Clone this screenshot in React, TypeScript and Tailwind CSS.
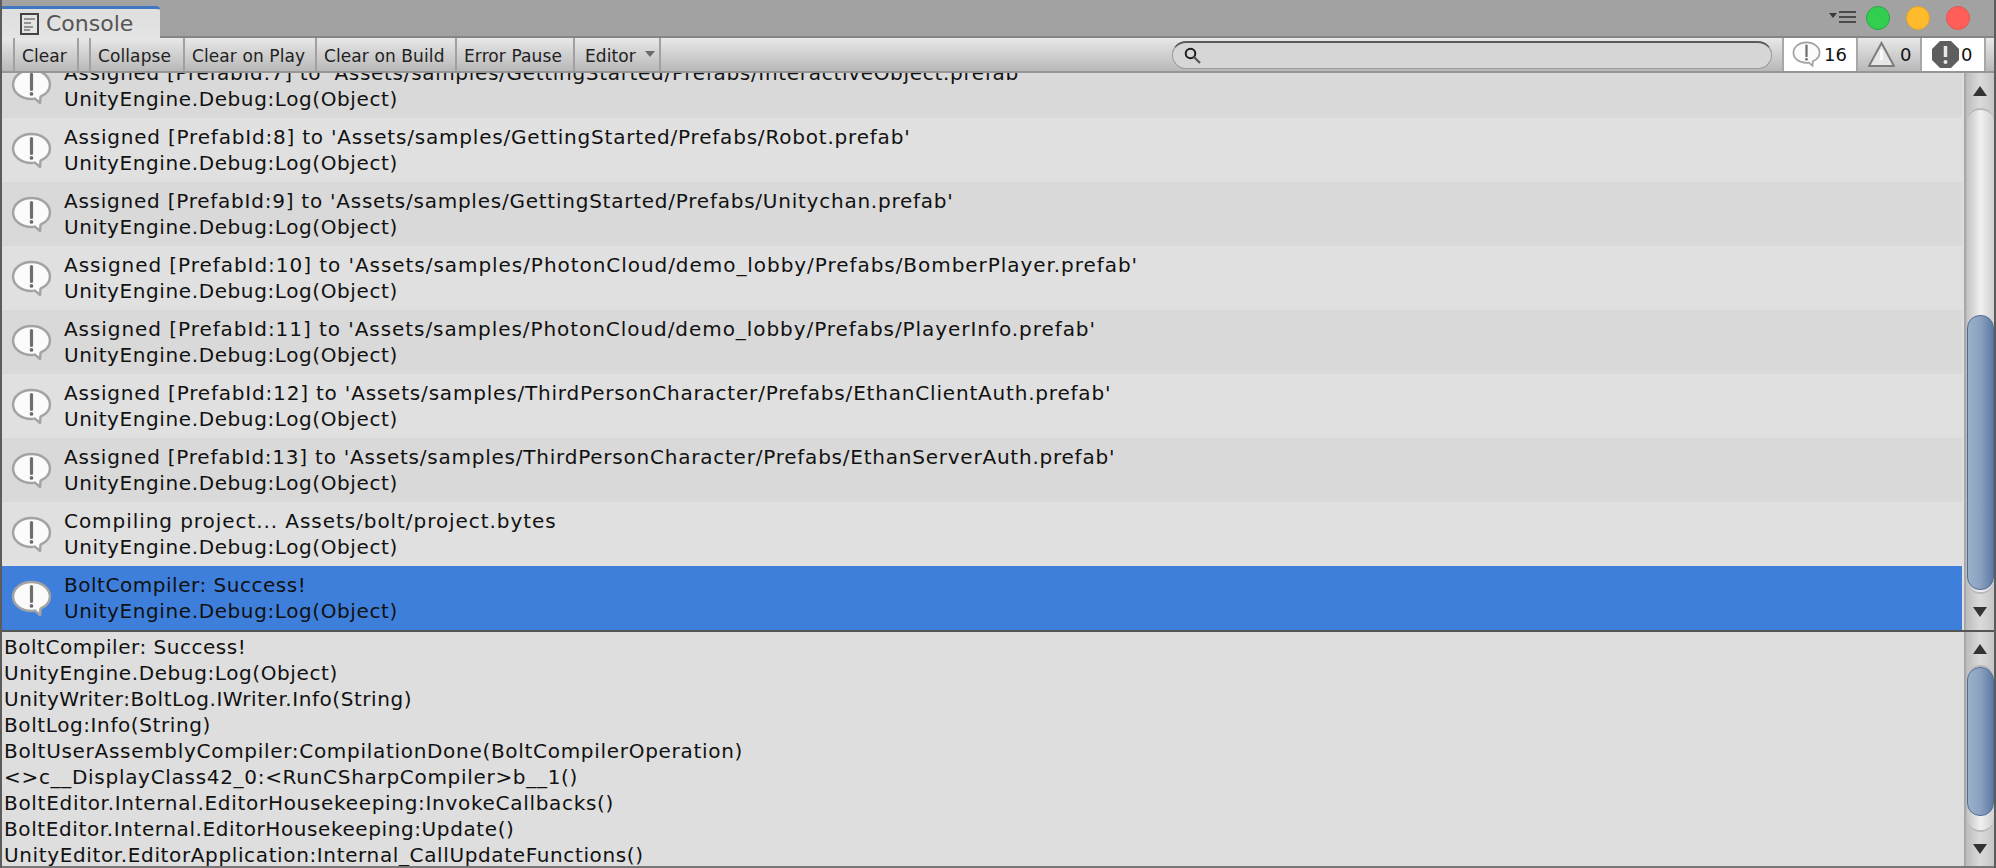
// tracking differs per line because the picture's font has other glyph widths than DejaVu
const rows = [
  { text: "Assigned [PrefabId:7] to 'Assets/samples/GettingStarted/Prefabs/InteractiveObject.prefab'", track: 'tracking-[0.69px]' },
  { text: "Assigned [PrefabId:8] to 'Assets/samples/GettingStarted/Prefabs/Robot.prefab'", track: 'tracking-[0.8px]' },
  { text: "Assigned [PrefabId:9] to 'Assets/samples/GettingStarted/Prefabs/Unitychan.prefab'", track: 'tracking-[0.76px]' },
  { text: "Assigned [PrefabId:10] to 'Assets/samples/PhotonCloud/demo_lobby/Prefabs/BomberPlayer.prefab'", track: 'tracking-[0.95px]' },
  { text: "Assigned [PrefabId:11] to 'Assets/samples/PhotonCloud/demo_lobby/Prefabs/PlayerInfo.prefab'", track: 'tracking-[0.94px]' },
  { text: "Assigned [PrefabId:12] to 'Assets/samples/ThirdPersonCharacter/Prefabs/EthanClientAuth.prefab'", track: 'tracking-[0.81px]' },
  { text: "Assigned [PrefabId:13] to 'Assets/samples/ThirdPersonCharacter/Prefabs/EthanServerAuth.prefab'", track: 'tracking-[0.77px]' },
  { text: 'Compiling project... Assets/bolt/project.bytes', track: 'tracking-[0.94px]' },
  { text: 'BoltCompiler: Success!', track: 'tracking-[0.53px]' },
]

const stack = [
  { text: 'BoltCompiler: Success!', track: 'tracking-[0.53px]' },
  { text: 'UnityEngine.Debug:Log(Object)', track: 'tracking-[0.6px]' },
  { text: 'UnityWriter:BoltLog.IWriter.Info(String)', track: 'tracking-[0.55px]' },
  { text: 'BoltLog:Info(String)', track: 'tracking-[0.6px]' },
  { text: 'BoltUserAssemblyCompiler:CompilationDone(BoltCompilerOperation)', track: 'tracking-[0.7px]' },
  { text: '<>c__DisplayClass42_0:<RunCSharpCompiler>b__1()', track: 'tracking-[0.7px]' },
  { text: 'BoltEditor.Internal.EditorHousekeeping:InvokeCallbacks()', track: 'tracking-[0.7px]' },
  { text: 'BoltEditor.Internal.EditorHousekeeping:Update()', track: 'tracking-[0.6px]' },
  { text: 'UnityEditor.EditorApplication:Internal_CallUpdateFunctions()', track: 'tracking-[0.63px]' },
]

const buttons = [
  { label: 'Clear', w: 'w-[64px]' },
  { label: 'Collapse', w: 'w-[94px]' },
  { label: 'Clear on Play', w: 'w-[132px]' },
  { label: 'Clear on Build', w: 'w-[140px]' },
  { label: 'Error Pause', w: 'w-[118px]' },
]

function InfoIcon({ size = 41 }: { size?: number }) {
  return (
    <svg width={size} height={size * 0.9} viewBox="0 0 41 37" className="shrink-0">
      <path
        d="M20.5 2C10 2 2 8.4 2 16.5S10 31 20.5 31c1.2 0 2.3-.1 3.4-.3L29 35l.6-6.2C35.300 26.200 39 21.800 39 16.500 39 8.400 31 2 20.500 2Z"
        fill="#fbfbfb"
        stroke="#a3a3a3"
        strokeWidth="2.5"
      />
      <path d="M20.500 6.500v15" stroke="#6e6e6e" strokeWidth="3.200" strokeLinecap="round" />
      <circle cx="20.500" cy="26" r="1.900" fill="#6e6e6e" />
    </svg>
  )
}

function Arrow({ down = false }: { down?: boolean }) {
  return (
    <svg width="14" height="10" viewBox="0 0 14 10" className="block">
      <path d={down ? 'M0 0h14L7 10Z' : 'M7 0l7 10H0Z'} fill="#333333" />
    </svg>
  )
}

function Scrollbar({ children, start, end }: { children: React.ReactNode; start: string; end: string }) {
  return (
    <div className="w-[30px] shrink-0 flex flex-col items-center bg-gradient-to-r from-[#bcbcbc] via-[#dadada] to-[#c6c6c6] border-l-2 border-[#a8a8a8]">
      <div className={`shrink-0 flex items-center justify-center ${start}`}>
        <Arrow />
      </div>
      <div className="flex-1 w-[27px] min-h-0 flex flex-col">{children}</div>
      <div className={`shrink-0 flex items-center justify-center ${end}`}>
        <Arrow down />
      </div>
    </div>
  )
}

// white rounded capsule with the blue position bar sitting inside it
function Thumb({ top, bottom }: { top: string; bottom: string }) {
  return (
    <div className="flex-1 rounded-[14px] bg-gradient-to-r from-[#c4c4c4] via-[#f0f0f0] to-[#d0d0d0] border-y-2 border-[#b8b8b8] flex flex-col">
      <div className={`${top} shrink-0`} />
      <div className="flex-1 rounded-[13px] bg-gradient-to-r from-[#9cb0cb] via-[#8ba1c0] to-[#5f7ba3] border border-[#4d6a98]" />
      <div className={`${bottom} shrink-0`} />
    </div>
  )
}

export default function App() {
  return (
    <div className="w-[1996px] h-[868px] overflow-hidden flex flex-col bg-[#dedede] font-['DejaVu_Sans',sans-serif] text-[#111111] border-x-2 border-x-[#5c5c5c]">
      {/* tab strip */}
      <div className="h-[36px] shrink-0 bg-[#a2a2a2] flex items-start justify-between">
        <div className="relative z-10 mt-[6px] w-[158px] h-[32px] border-t-[3px] border-[#3f77c0] rounded-tr-[4px] bg-gradient-to-b from-[#dedede] to-[#e4e4e4] flex items-center pl-[18px] gap-[7px] text-[22px] text-[#555555]">
          <svg width="19" height="22" viewBox="0 0 19 22">
            <rect x="1" y="1" width="17" height="20" fill="#e4e4e4" stroke="#444444" strokeWidth="2" />
            <path d="M4 6h11M4 10h7M4 14h9M4 17h6" stroke="#777777" strokeWidth="1.500" />
          </svg>
          <span>Console</span>
        </div>
        <div className="flex items-center gap-[16px] h-full pr-[24px]">
          <svg width="28" height="12" viewBox="0 0 28 12" className="-mr-[7px] -mt-[3px]">
            <path d="M0 2h8L4 7Z" fill="#3a3a3a" />
            <path d="M10 1h17M10 6h17M10 11h17" stroke="#4a4a4a" strokeWidth="2" />
          </svg>
          <div className="w-[24px] h-[24px] rounded-full bg-[#31ce4f] border border-[#2aa842]" />
          <div className="w-[24px] h-[24px] rounded-full bg-[#ffbb2c] border border-[#e0a52f]" />
          <div className="w-[24px] h-[24px] rounded-full bg-[#ff5f58] border border-[#e6544f]" />
        </div>
      </div>

      {/* toolbar */}
      <div className="h-[37px] shrink-0 flex items-stretch border-t-2 border-t-[#858585] border-b-2 border-b-[#969696] bg-gradient-to-b from-[#e8e8e8] to-[#b8b8b8] text-[17px] tracking-[0.1px] text-[#222222]">
        <div className="w-[11px] shrink-0" />
        {buttons.map((b, i) => (
          <div key={b.label} className="flex shrink-0">
            <div className={`${b.w} flex items-center pl-[7px] pt-[4px] border-l-2 border-[#a0a0a0]`}>
              {b.label}
            </div>
            {i === 0 && <div className="w-[12px] border-l-2 border-[#a0a0a0]" />}
          </div>
        ))}
        <div className="w-[88px] shrink-0 flex items-center pl-[10px] pt-[4px] gap-[9px] border-x-2 border-[#a0a0a0]">
          Editor
          <svg width="10" height="6" viewBox="0 0 10 6" className="-mt-[6px]">
            <path d="M0 0h10L5 6Z" fill="#6a6a6a" />
          </svg>
        </div>
        <div className="flex-1" />
        <div className="w-[600px] h-[28px] self-center shrink-0 rounded-[14px] bg-[#d6d6d6] border border-[#9a9a9a] border-t-2 border-t-[#5a5a5a] flex items-center pl-[11px]">
          <svg width="17" height="17" viewBox="0 0 17 17">
            <circle cx="6.500" cy="6.500" r="4.800" fill="none" stroke="#1c1c1c" strokeWidth="2" />
            <path d="M10 10l6 6" stroke="#555555" strokeWidth="2.200" />
          </svg>
        </div>
        <div className="w-[10px] shrink-0" />
        <div className="w-[74px] shrink-0 flex items-center pl-[8px] gap-[3px] bg-white border-l-2 border-[#a8a8a8] text-[#111111] text-[18px]">
          <InfoIcon size={29} />
          16
        </div>
        <div className="w-[64px] shrink-0 flex items-center pl-[10px] gap-[5px] border-l-2 border-[#a8a8a8] text-[#111111] text-[18px]">
          <svg width="27" height="27" viewBox="0 0 27 27" className="shrink-0">
            <path d="M13.500 2 26 25H1Z" fill="#e6e6e6" stroke="#7c7c7c" strokeWidth="2" />
            <path d="M13.500 9v10" stroke="#fafafa" strokeWidth="3" />
          </svg>
          0
        </div>
        <div className="w-[64px] shrink-0 flex items-center pl-[9px] gap-[1px] bg-white border-l-2 border-[#a8a8a8] text-[#111111] text-[18px]">
          <svg width="29" height="29" viewBox="0 0 29 29" className="shrink-0">
            <path d="M9 1h11l8 8v11l-8 8H9l-8-8V9Z" fill="#5e5e5e" />
            <path d="M14.500 6v11" stroke="#e8e8e8" strokeWidth="3.500" />
            <circle cx="14.500" cy="22" r="2" fill="#e8e8e8" />
          </svg>
          0
        </div>
        <div className="w-[10px] shrink-0 border-l-2 border-[#a8a8a8]" />
      </div>

      {/* log rows */}
      <div className="h-[559px] shrink-0 flex min-h-0 border-b-2 border-b-[#555555]">
        <div className="flex-1 min-w-0 overflow-hidden pr-[2px] bg-[#dfdfdf]">
          <div className="-mt-[19px]">
            {rows.map((row, i) => {
              const selected = i === rows.length - 1
              return (
                <div
                  key={row.text}
                  className={`h-[64px] flex items-center pl-[9px] gap-[12px] text-[20px] leading-[26px] ${
                    selected ? 'bg-[#3f7fdc]' : i % 2 === 0 ? 'bg-[#d9d9d9]' : 'bg-[#e0e0e0]'
                  }`}
                >
                  <InfoIcon />
                  <div className="whitespace-nowrap">
                    <div className={row.track}>{row.text}</div>
                    <div className="tracking-[0.6px]">UnityEngine.Debug:Log(Object)</div>
                  </div>
                </div>
              )
            })}
          </div>
        </div>
        <Scrollbar start="h-[35px]" end="h-[36px]">
          <Thumb top="h-[205px]" bottom="h-[2px]" />
        </Scrollbar>
      </div>

      {/* stack trace */}
      <div className="flex-1 min-h-0 flex border-b-2 border-b-[#777777]">
        <div className="flex-1 min-w-0 pl-[2px] pt-[2px] text-[20px] leading-[26px] overflow-hidden whitespace-nowrap">
          {stack.map((line) => (
            <div key={line.text} className={line.track}>
              {line.text}
            </div>
          ))}
        </div>
        <Scrollbar start="h-[33px]" end="h-[34px]">
          <Thumb top="h-[0px]" bottom="h-[14px]" />
        </Scrollbar>
      </div>
    </div>
  )
}
